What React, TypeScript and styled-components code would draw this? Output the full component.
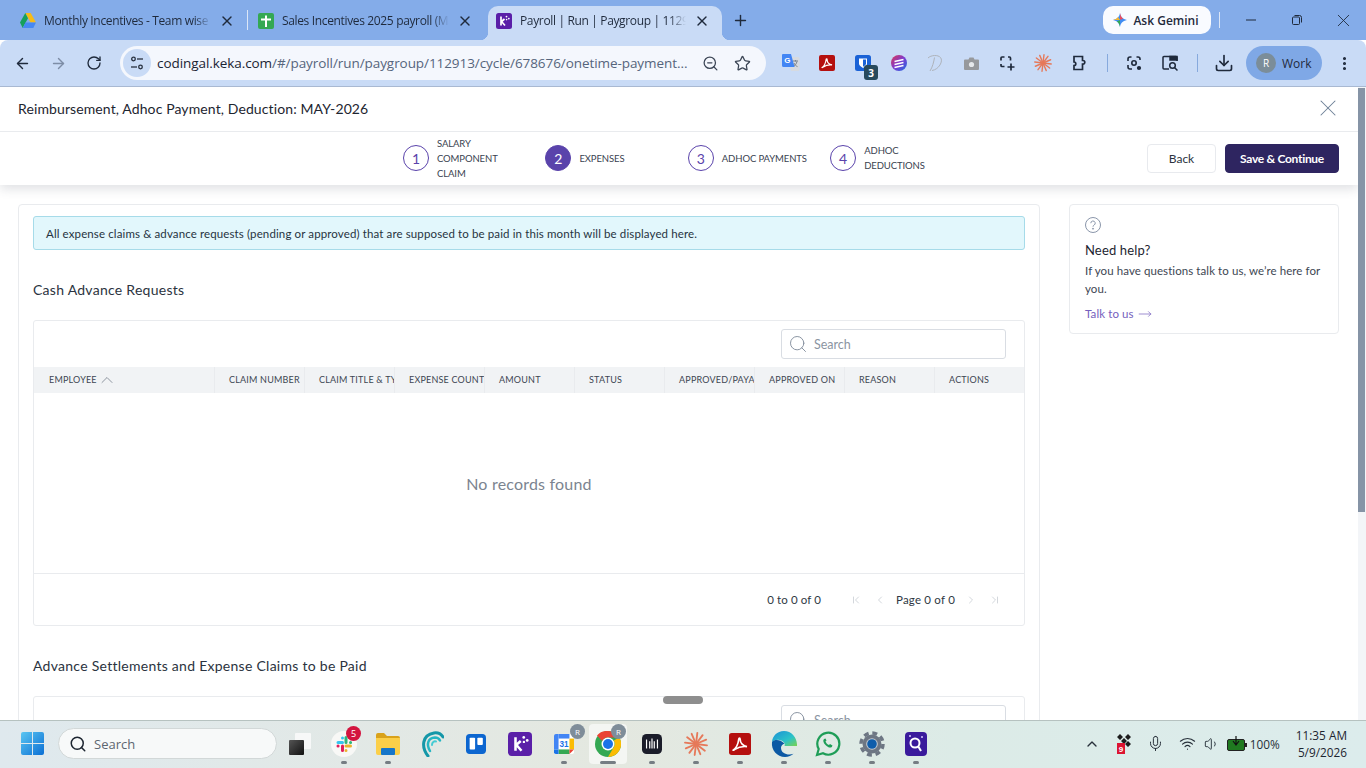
import { Fragment } from 'react';
import type { ReactNode } from 'react';
import styled, { createGlobalStyle, css } from 'styled-components';
import {
  ArrowLeft,
  ArrowRight,
  ChevronFirst,
  ChevronLast,
  ChevronLeft,
  ChevronRight,
  ChevronUp,
  Download,
  Mic,
  MoveRight,
  MoreVertical,
  Plus,
  RotateCw,
  Search as SearchIcon,
  Star,
  Volume1,
  Wifi,
  X,
  ZoomOut,
} from 'lucide-react';

const chromeFont = '"Open Sans", "Noto Sans", sans-serif';
const pageFont = 'Lato, "Open Sans", sans-serif';

const GlobalStyle = createGlobalStyle`
  html, body, #root {
    margin: 0;
    padding: 0;
    height: 100%;
    overflow: hidden;
  }
  * {
    box-sizing: border-box;
  }
`;

const Screen = styled.div`
  width: 1366px;
  height: 768px;
  display: flex;
  flex-direction: column;
  overflow: hidden;
  font-family: ${pageFont};
  background: #fff;
`;

/* browser chrome */

const TabStrip = styled.div`
  height: 40px;
  flex: none;
  display: flex;
  align-items: flex-end;
  padding-left: 10px;
  background: #84ace9;
  font-family: ${chromeFont};
`;

const activeTab = css`
  position: relative;
  width: 234px;
  margin: 0 1px 0 2px;
  padding-left: 8px;
  background: #c9dbf6;
  &::before,
  &::after {
    content: '';
    position: absolute;
    bottom: 0;
    width: 8px;
    height: 8px;
  }
  &::before {
    left: -8px;
    background: radial-gradient(circle at 0 0, transparent 8px, #c9dbf6 8.5px);
  }
  &::after {
    right: -8px;
    background: radial-gradient(circle at 100% 0, transparent 8px, #c9dbf6 8.5px);
  }
`;

const Tab = styled.div<{ $active?: boolean }>`
  width: 237px;
  height: 34px;
  display: flex;
  align-items: center;
  gap: 8px;
  padding: 0 12px 5px 10px;
  border-radius: 10px 10px 0 0;
  color: #1f2a3c;
  ${(p) => p.$active && activeTab}
`;

const TabTitle = styled.span`
  flex: 1;
  min-width: 0;
  font-size: 12px;
  letter-spacing: -0.35px;
  white-space: nowrap;
  overflow: hidden;
  -webkit-mask-image: linear-gradient(90deg, #000 90%, transparent);
  mask-image: linear-gradient(90deg, #000 90%, transparent);
`;

const TabSep = styled.div<{ $hidden?: boolean }>`
  width: 1px;
  height: 20px;
  margin-bottom: 10px;
  background: ${(p) => (p.$hidden ? 'transparent' : '#dbe6f7')};
`;

const NewTab = styled.div`
  width: 34px;
  height: 34px;
  padding-bottom: 5px;
  display: flex;
  align-items: center;
  justify-content: center;
  color: #1f2a3c;
`;

const StripRight = styled.div`
  margin-left: auto;
  align-self: stretch;
  display: flex;
  align-items: center;
`;

const GeminiPill = styled.div`
  width: 108px;
  height: 28px;
  padding-right: 2px;
  display: flex;
  align-items: center;
  justify-content: center;
  gap: 6px;
  border-radius: 10px;
  background: #f9fbff;
  font-size: 12px;
  font-weight: 600;
  color: #1f2a3c;
`;

const StripSep = styled.div`
  width: 1px;
  height: 16px;
  margin: 0 8px;
  background: #dbe6f7;
`;

const WinButton = styled.div`
  width: 46px;
  height: 40px;
  display: flex;
  align-items: center;
  justify-content: center;
  color: #1f2a3c;
`;

const Toolbar = styled.div`
  height: 47px;
  flex: none;
  display: flex;
  align-items: center;
  padding-left: 4px;
  background: #c9dbf6;
  border-bottom: 1px solid #a9b9d2;
  border-radius: 8px 8px 0 0;
  font-family: ${chromeFont};
`;

const ToolButton = styled.div<{ $muted?: boolean }>`
  position: relative;
  width: 36px;
  height: 36px;
  flex: none;
  display: flex;
  align-items: center;
  justify-content: center;
  color: ${(p) => (p.$muted ? '#7d8da6' : '#1f2a3c')};
`;

const Omnibox = styled.div`
  width: 646px;
  height: 34px;
  flex: none;
  margin: 0 7px 0 8px;
  padding: 0 8px 0 3px;
  display: flex;
  align-items: center;
  border-radius: 17px;
  background: #f4f7fd;
`;

const TuneBadge = styled.div`
  width: 28px;
  height: 28px;
  flex: none;
  display: flex;
  align-items: center;
  justify-content: center;
  border-radius: 50%;
  background: #c9dbf6;
`;

const Url = styled.div`
  flex: 1;
  min-width: 0;
  margin-left: 6px;
  font-size: 13.5px;
  letter-spacing: -0.07px;
  white-space: nowrap;
  overflow: hidden;
  color: #56657c;
  b {
    font-weight: 400;
    color: #1b2433;
  }
`;

const OmniIcon = styled.div`
  width: 32px;
  display: flex;
  justify-content: center;
  color: #3c4656;
`;

const ToolSep = styled.div<{ $left: number; $right: number }>`
  width: 1px;
  height: 18px;
  flex: none;
  margin: 0 ${(p) => p.$right}px 0 ${(p) => p.$left}px;
  background: #86a9dd;
`;

const CountBadge = styled.span`
  position: absolute;
  right: 3px;
  bottom: 1px;
  width: 14px;
  height: 15px;
  display: flex;
  align-items: center;
  justify-content: center;
  border-radius: 3px;
  background: #27495c;
  color: #fff;
  font-size: 10px;
  font-weight: 700;
`;

const ProfilePill = styled.div`
  width: 76px;
  height: 34px;
  flex: none;
  margin: 0 4px;
  padding-left: 10px;
  display: flex;
  align-items: center;
  gap: 6px;
  border-radius: 17px;
  background: #7fa8e6;
  font-size: 12px;
  color: #1f2a3c;
`;

const ProfileAvatar = styled.span`
  width: 20px;
  height: 20px;
  display: flex;
  align-items: center;
  justify-content: center;
  border-radius: 50%;
  background: #7b8d99;
  color: #fff;
  font-size: 10px;
`;

/* keka page */

const PageArea = styled.div`
  position: relative;
  flex: 1;
  min-height: 0;
  display: flex;
`;

const Page = styled.div`
  flex: 1;
  min-width: 0;
  display: flex;
  flex-direction: column;
  overflow: hidden;
`;

const Scrollbar = styled.div`
  width: 8px;
  flex: none;
  padding-top: 1px;
  background: #f3f5f8;
`;

const ScrollThumb = styled.div`
  width: 7px;
  height: 424px;
  background: #8694a6;
`;

const PageHeader = styled.header`
  position: relative;
  z-index: 1;
  flex: none;
  background: #fff;
  box-shadow: 0 4px 10px rgba(60, 70, 90, 0.16);
`;

const TitleRow = styled.div`
  height: 45px;
  display: flex;
  align-items: center;
  justify-content: space-between;
  padding: 0 16px 2px 18px;
  border-bottom: 1px solid #e9ebee;
`;

const PageTitle = styled.h1`
  margin: 0;
  font-size: 14px;
  font-weight: 400;
  letter-spacing: 0.11px;
  color: #1d2530;
`;

const CloseIcon = styled.div`
  display: flex;
  color: #6d7f96;
`;

const StepRow = styled.div`
  height: 53px;
  display: flex;
  align-items: center;
  padding: 0 19px 1px 403px;
`;

const Step = styled.div`
  width: 142.4px;
  display: flex;
  align-items: center;
  gap: 8px;
`;

const StepCircle = styled.span<{ $active?: boolean }>`
  width: 26px;
  height: 26px;
  flex: none;
  display: flex;
  align-items: center;
  justify-content: center;
  border-radius: 50%;
  border: 1px solid #5a43ab;
  background: ${(p) => (p.$active ? '#5a43ab' : '#fff')};
  color: ${(p) => (p.$active ? '#fff' : '#5a43ab')};
  font-size: 14px;
`;

const StepLabel = styled.span`
  max-width: 88px;
  font-size: 9.5px;
  line-height: 15px;
  letter-spacing: -0.1px;
  color: #39424f;
  text-transform: uppercase;
`;

const StepActions = styled.div`
  margin-left: auto;
  display: flex;
  gap: 9px;
`;

const Button = styled.button<{ $primary?: boolean }>`
  height: 29px;
  width: ${(p) => (p.$primary ? '114px' : '69px')};
  padding: 0;
  border-radius: 4px;
  border: 1px solid ${(p) => (p.$primary ? '#2e2560' : '#e8eaee')};
  background: ${(p) => (p.$primary ? '#2e2560' : '#fff')};
  color: ${(p) => (p.$primary ? '#fff' : '#2b3340')};
  font-family: ${pageFont};
  font-size: 12px;
  letter-spacing: ${(p) => (p.$primary ? '-0.3px' : '0')};
  font-weight: ${(p) => (p.$primary ? 700 : 400)};
`;

const Body = styled.div`
  flex: 1;
  min-height: 0;
  display: flex;
  align-items: flex-start;
  gap: 29px;
  padding: 19px 19px 0 18px;
  overflow: hidden;
`;

const MainCard = styled.section`
  width: 1022px;
  flex: none;
  padding: 11px 14px 0;
  border: 1px solid #e9ebee;
  border-radius: 4px;
`;

const Notice = styled.div`
  height: 34px;
  display: flex;
  align-items: center;
  padding-left: 12px;
  border: 1px solid #a6dbe9;
  border-radius: 3px;
  background: #e2f7fc;
  font-size: 11.5px;
  letter-spacing: 0.12px;
  color: #26333f;
`;

const SectionTitle = styled.h2`
  margin: 31px 0 22px;
  font-size: 14px;
  line-height: 17px;
  font-weight: 400;
  letter-spacing: 0.27px;
  color: #2b3340;
`;

const TableBox = styled.div`
  border: 1px solid #e9ebee;
  border-radius: 3px;
`;

const TableTools = styled.div`
  height: 46px;
  display: flex;
  align-items: flex-start;
  justify-content: flex-end;
  padding: 8px 18px 0 0;
`;

const SearchField = styled.div`
  width: 225px;
  height: 30px;
  display: flex;
  align-items: center;
  gap: 6px;
  padding-left: 6px;
  border: 1px solid #d9dde3;
  border-radius: 3px;
  font-size: 12.5px;
  color: #8b94a1;
`;

const HeadRow = styled.div`
  height: 26px;
  display: grid;
  grid-template-columns: 180px repeat(9, 90px);
  background: #f1f3f5;
`;

const HeadCell = styled.div`
  display: flex;
  align-items: center;
  padding: 0 0 1px 15px;
  overflow: hidden;
  white-space: nowrap;
  font-size: 9px;
  letter-spacing: 0.2px;
  color: #3d4652;
  & + & {
    padding-left: 14px;
    border-left: 1px solid #e9ebee;
  }
`;

const EmptyBody = styled.div`
  height: 180px;
  display: flex;
  align-items: center;
  justify-content: center;
  font-size: 16px;
  letter-spacing: 0.2px;
  color: #7b8490;
`;

const Pager = styled.div`
  height: 52px;
  display: flex;
  align-items: center;
  justify-content: flex-end;
  gap: 10px;
  padding-right: 22px;
  border-top: 1px solid #e9ebee;
  font-size: 11.5px;
  letter-spacing: 0.1px;
  color: #2f3844;
`;

const PagerCount = styled.span`
  margin-right: 18px;
`;

const PagerPage = styled.span`
  margin: 0 -1px;
  letter-spacing: 0.2px;
`;

const PagerArrow = styled.span`
  width: 14px;
  display: flex;
  justify-content: center;
  color: #d3d7dc;
`;

const HelpCard = styled.aside`
  width: 270px;
  flex: none;
  height: 130px;
  padding: 12px 15px;
  border: 1px solid #e9ebee;
  border-radius: 4px;
`;

const HelpIcon = styled.div`
  display: flex;
  color: #8a96aa;
`;

const HelpTitle = styled.h3`
  margin: 8px 0 3px;
  font-size: 13px;
  line-height: 18px;
  font-weight: 400;
  letter-spacing: 0.15px;
  color: #1d2530;
`;

const HelpText = styled.p`
  margin: 0 0 4px;
  font-size: 11.5px;
  line-height: 18px;
  letter-spacing: 0.08px;
  color: #3d4652;
`;

const HelpLink = styled.a`
  display: inline-flex;
  align-items: center;
  gap: 4px;
  font-size: 11.5px;
  line-height: 18px;
  letter-spacing: 0.1px;
  color: #7560bd;
`;

const DragHandle = styled.div`
  position: absolute;
  left: 663px;
  bottom: 16px;
  width: 40px;
  height: 8px;
  border-radius: 4px;
  background: #8e8e8e;
`;

/* windows taskbar */

const Taskbar = styled.footer`
  height: 48px;
  flex: none;
  display: flex;
  align-items: center;
  padding: 0 0 2px 10px;
  border-top: 1px solid #b6c2c0;
  background: linear-gradient(90deg, #dfe9ee, #e4e8e0 45%, #dcebe7 70%, #dcecec);
  font-family: ${chromeFont};
  color: #1c2530;
`;

const StartButton = styled.div`
  width: 44px;
  flex: none;
  display: flex;
  justify-content: center;
`;

const TaskSearch = styled.div`
  width: 219px;
  height: 31px;
  flex: none;
  margin: 0 0 0 4px;
  padding-left: 10px;
  display: flex;
  align-items: center;
  gap: 7px;
  border: 1px solid #d2d8d8;
  border-radius: 16px;
  background: #f7f9f9;
  font-size: 13px;
  color: #5d6670;
`;

const TaskIcons = styled.div`
  margin-left: 1px;
  display: flex;
`;

const TaskSlot = styled.div<{ $active?: boolean }>`
  position: relative;
  width: ${(p) => (p.$active ? '38px' : '44px')};
  height: 40px;
  margin: 0 ${(p) => (p.$active ? '3px' : '0')};
  display: flex;
  align-items: center;
  justify-content: center;
  border-radius: 4px;
  background: ${(p) => (p.$active ? 'rgba(255,255,255,.6)' : 'transparent')};
`;

const RunDot = styled.span<{ $active?: boolean }>`
  position: absolute;
  left: 50%;
  bottom: 0;
  width: ${(p) => (p.$active ? '16px' : '6px')};
  height: 3px;
  margin-left: ${(p) => (p.$active ? '-8px' : '-3px')};
  border-radius: 2px;
  background: #757d83;
`;

const RedBadge = styled.span`
  position: absolute;
  top: 2px;
  right: 5px;
  width: 15px;
  height: 15px;
  display: flex;
  align-items: center;
  justify-content: center;
  border-radius: 50%;
  background: #d3143f;
  color: #fff;
  font-size: 9px;
`;

const GreyBadge = styled.span`
  position: absolute;
  top: 0;
  right: 1px;
  width: 15px;
  height: 15px;
  display: flex;
  align-items: center;
  justify-content: center;
  border-radius: 50%;
  background: #7f8d99;
  color: #fff;
  font-size: 8px;
`;

const Tray = styled.div`
  margin-left: auto;
  display: flex;
  align-items: center;
  padding-right: 19px;
`;

const TrayItem = styled.div<{ $width: number }>`
  width: ${(p) => p.$width}px;
  display: flex;
  align-items: center;
  justify-content: center;
  color: #27303a;
`;

const BatteryItem = styled.div`
  width: 60px;
  display: flex;
  align-items: center;
  justify-content: flex-end;
  gap: 3px;
  font-size: 11.8px;
  color: #27303a;
`;

const Clock = styled.div`
  margin-left: 16px;
  text-align: right;
  font-size: 11.8px;
  line-height: 17px;
`;

/* drawn logos */

const DriveLogo = () => (
  <svg width="16" height="15" viewBox="0 0 16 15">
    <path d="M5.3 0h5.4l5.3 9.500h-5.400z" fill="#f6bb18" />
    <path d="M5.300 0 0 9.500 2.700 15l5.300-9.700z" fill="#16a05d" />
    <path d="M2.700 15 5.400 9.500H16L13.300 15z" fill="#4688f4" />
  </svg>
);

const SheetLogo = () => (
  <svg width="16" height="16" viewBox="0 0 16 16">
    <rect width="16" height="16" rx="2" fill="#34a853" />
    <path d="M7 2.500h2V14H7zM3 5.500h10v2H3z" fill="#fff" />
  </svg>
);

const KekaLogo = ({ size = 16 }: { size?: number }) => (
  <svg width={size} height={size} viewBox="0 0 16 16">
    <rect width="16" height="16" rx="2.500" fill="#5a1fa8" />
    <path d="M5 3.500v9M5 9l3.500-3M5.500 8.500l3.500 4" stroke="#fff" strokeWidth="1.700" fill="none" />
    <circle cx="10.500" cy="3.600" r=".9" fill="#fff" />
    <circle cx="12.800" cy="5.600" r=".9" fill="#fff" />
    <circle cx="10.600" cy="6.600" r=".8" fill="#fff" />
  </svg>
);

const GeminiLogo = () => (
  <svg width="14" height="14" viewBox="0 0 14 14">
    <path d="M7 0c.6 3.600 2.400 6 7 7-4.600 1-6.400 3.400-7 7-.6-3.600-2.400-6-7-7 4.600-1 6.400-3.400 7-7z" fill="#3f8cf2" />
    <path d="M7 0c.4 2.400 1.300 4.200 3.200 5.400L7 7z" fill="#ea4c5e" />
    <path d="M0 7c2.400-.5 4-1.400 5-3L7 7z" fill="#f7b52c" />
    <path d="M7 14c-.4-2.400-1.300-4.200-3.200-5.400L7 7z" fill="#34a853" />
  </svg>
);

const TuneIcon = () => (
  <svg width="16" height="16" viewBox="0 0 16 16" fill="none" stroke="#27303f" strokeWidth="1.300">
    <circle cx="4.500" cy="4" r="1.800" />
    <path d="M8 4h6" />
    <circle cx="11.500" cy="12" r="1.800" />
    <path d="M2 12h6" />
  </svg>
);

const TranslateLogo = () => (
  <svg width="20" height="20" viewBox="0 0 20 20">
    <path d="M8 4h9a1.500 1.500 0 0 1 1.500 1.500v11A1.500 1.500 0 0 1 17 18H10z" fill="#d6dae0" />
    <path
      d="M12 8h5M14.500 7v1.500M16 8.500c-.6 2.400-2 4-3.500 5M13 10c.6 1.600 2 3 3.500 3.600"
      stroke="#7b838d"
      strokeWidth="1"
      fill="none"
    />
    <path d="M2 1h8l3.600 13H2.500A1.500 1.500 0 0 1 1 12.500V2a1 1 0 0 1 1-1z" fill="#4285f4" />
    <text x="3.200" y="10" fontFamily="Liberation Sans, sans-serif" fontSize="8" fontWeight="700" fill="#fff">
      G
    </text>
  </svg>
);

const AcrobatLogo = ({ size = 16 }: { size?: number }) => (
  <svg width={size} height={size} viewBox="0 0 16 16">
    <rect width="16" height="16" rx="2" fill="#b5100f" />
    <path
      d="M3 12.500c2-1.200 3.600-4.200 4.100-8 .1-1 1-1 1 0 0 2.800 2.200 5 5 5.400-2.800-.3-6.500.4-8.800 2-.7.500-1.300.8-1.300.6z"
      fill="none"
      stroke="#fff"
      strokeWidth="1.200"
    />
  </svg>
);

const BitwardenLogo = () => (
  <svg width="16" height="16" viewBox="0 0 16 16">
    <rect width="16" height="16" rx="2.500" fill="#1a62d6" />
    <path d="M4 3.500h8v5c0 2-2 3.400-4 4.500-2-1.100-4-2.500-4-4.500z" fill="#fff" />
    <path d="M8 4.500h3v4c0 1.400-1.500 2.400-3 3.200z" fill="#1a62d6" />
  </svg>
);

const StackLogo = () => (
  <svg width="16" height="16" viewBox="0 0 16 16">
    <defs>
      <linearGradient id="stackFill" x1="0" y1="0" x2="1" y2="1">
        <stop offset="0" stopColor="#e0364f" />
        <stop offset=".5" stopColor="#7d3bd1" />
        <stop offset="1" stopColor="#1c6fe0" />
      </linearGradient>
    </defs>
    <circle cx="8" cy="8" r="8" fill="url(#stackFill)" />
    <path d="M3.500 6.500 12.500 4.500M3.500 9.500l9-2M3.500 12.500l9-2" stroke="#fff" strokeWidth="1.300" />
  </svg>
);

const ScriptD = () => (
  <svg width="20" height="20" viewBox="0 0 20 20" fill="none" stroke="#aeb3ba" strokeWidth="1">
    <path d="M3 5c3-3 10-3.400 12.500-.5 3 3.500-1.500 12-8.500 13M9.500 4.500C8.800 9 7.500 14 5 18" />
  </svg>
);

const CameraLogo = () => (
  <svg width="15" height="13" viewBox="0 0 15 13">
    <path
      d="M1 2.500h3.500L5.500.5h4l1 2H14a1 1 0 0 1 1 1V12a1 1 0 0 1-1 1H1a1 1 0 0 1-1-1V3.500a1 1 0 0 1 1-1z"
      fill="#97999c"
    />
    <circle cx="7.500" cy="7.500" r="2.600" fill="#e6e8ea" />
  </svg>
);

const CaptureIcon = () => (
  <svg width="18" height="18" viewBox="0 0 18 18" fill="none" stroke="#1f2a3c" strokeWidth="1.700">
    <path d="M3 6.500V4a1 1 0 0 1 1-1h2.500M10 3h1.500a1 1 0 0 1 1 1v2.500M3 10v1.500a1 1 0 0 0 1 1h2.500M13 9.500v7M9.500 13h7" />
  </svg>
);

const ExtensionIcon = () => (
  <svg width="18" height="18" viewBox="0 0 18 18" fill="none" stroke="#1f2a3c" strokeWidth="1.700">
    <path d="M4 2.500h8.500v4h.5a1.800 1.800 0 0 1 0 3.600h-.5v5.400H4v-3.900a1.800 1.800 0 0 0 0-3.600z" />
  </svg>
);

const Burst = ({ size = 18 }: { size?: number }) => (
  <svg width={size} height={size} viewBox="0 0 18 18" stroke="#e6795a" strokeWidth="1.400" strokeLinecap="round">
    {Array.from({ length: 12 }).map((_, i) => {
      const a = (i * Math.PI) / 6;
      return <line key={i} x1={9} y1={9} x2={9 + 8.3 * Math.cos(a + 0.12)} y2={9 + 8.3 * Math.sin(a + 0.12)} />;
    })}
  </svg>
);

const LensIcon = () => (
  <svg width="18" height="18" viewBox="0 0 18 18" fill="none" stroke="#1f2a3c" strokeWidth="1.600">
    <path d="M3 7V5a2 2 0 0 1 2-2h1.500M11.500 3H13a2 2 0 0 1 2 2v1M3 11v2a2 2 0 0 0 2 2h2" />
    <circle cx="9" cy="9" r="2.200" />
    <circle cx="14" cy="14" r="1.300" fill="#1f2a3c" />
  </svg>
);

const TabSearchIcon = () => (
  <svg width="18" height="18" viewBox="0 0 18 18" fill="none" stroke="#1f2a3c" strokeWidth="1.500">
    <path d="M8 15H3a1 1 0 0 1-1-1V3.500a1 1 0 0 1 1-1h12a1 1 0 0 1 1 1V7" />
    <path d="M9 2.500h7V6H9z" fill="#1f2a3c" />
    <circle cx="11.500" cy="11.500" r="2.800" />
    <path d="m13.500 13.500 3 3" />
  </svg>
);

const RestoreIcon = () => (
  <svg width="10" height="10" viewBox="0 0 10 10" fill="none" stroke="#1f2a3c">
    <rect x=".5" y="2" width="7" height="7.500" rx="1" />
    <path d="M2.500 .5h5a2 2 0 0 1 2 2v5" />
  </svg>
);

const WindowsLogo = () => (
  <svg width="23" height="23" viewBox="0 0 23 23">
    <defs>
      <linearGradient id="winFill" x1="0" y1="0" x2="1" y2="1">
        <stop offset="0" stopColor="#5bc6f2" />
        <stop offset="1" stopColor="#0b6fd4" />
      </linearGradient>
    </defs>
    <path
      d="M0 2a2 2 0 0 1 2-2h9v11H0zM12 0h9a2 2 0 0 1 2 2v9H12zM0 12h11v11H2a2 2 0 0 1-2-2zM12 12h11v9a2 2 0 0 1-2 2h-9z"
      fill="url(#winFill)"
    />
  </svg>
);

const TaskViewIcon = () => (
  <svg width="22" height="22" viewBox="0 0 22 22">
    <defs>
      <linearGradient id="viewFill" x1="0" y1="0" x2="1" y2="1">
        <stop offset="0" stopColor="#555" />
        <stop offset="1" stopColor="#111" />
      </linearGradient>
    </defs>
    <rect x="6" y="0" width="16" height="16" rx="1" fill="#f7f8f8" />
    <rect x="0" y="7" width="15" height="15" rx="1" fill="url(#viewFill)" />
  </svg>
);

const SlackLogo = () => (
  <svg width="26" height="26" viewBox="0 0 26 26">
    <circle cx="13" cy="13" r="13" fill="#f8f8f6" />
    <g strokeWidth="3" strokeLinecap="round">
      <path d="M7 11.500h4.500M11.500 7v.1" stroke="#36c5f0" />
      <path d="M15 6.500V11.500M19.500 11.500h.1" stroke="#2eb67d" />
      <path d="M15 15h4.500M15 19.500v.1" stroke="#ecb22e" />
      <path d="M11.500 15v4.500M7 15h.1" stroke="#e01e5a" />
    </g>
  </svg>
);

const FolderLogo = () => (
  <svg width="24" height="22" viewBox="0 0 24 22">
    <path d="M0 2a2 2 0 0 1 2-2h6l3 3h11a2 2 0 0 1 2 2v4H0z" fill="#d9a21b" />
    <path d="M0 5h24v15a2 2 0 0 1-2 2H2a2 2 0 0 1-2-2z" fill="#fbcf49" />
    <rect x="5" y="15" width="14" height="7" rx="1" fill="#1676c9" />
  </svg>
);

const SwirlLogo = () => (
  <svg width="24" height="26" viewBox="0 0 24 26" fill="none" strokeLinecap="round">
    <path d="M8 25C1 16 2 4 14 2c4-.6 7 1 9 4" stroke="#1497a8" strokeWidth="3" />
    <path d="M10 20C6 13 8 7 15 6.500c2.500 0 4 1 5 3" stroke="#25b5c2" strokeWidth="2.500" />
    <path d="M12 14c0-3 2-4 4-3.500" stroke="#45cbd3" strokeWidth="2" />
  </svg>
);

const TrelloLogo = () => (
  <svg width="20" height="20" viewBox="0 0 22 22">
    <rect width="22" height="22" rx="4" fill="#0c66d0" />
    <rect x="4" y="4" width="6" height="13" rx="1" fill="#fff" />
    <rect x="12.500" y="4" width="6" height="8" rx="1" fill="#fff" />
  </svg>
);

const CalendarLogo = () => (
  <svg width="20" height="22" viewBox="0 0 22 22">
    <rect width="22" height="22" rx="2" fill="#fff" />
    <path d="M0 2a2 2 0 0 1 2-2h3v17H0z" fill="#4285f4" />
    <path d="M5 0h12v5H5z" fill="#4285f4" />
    <path d="M17 5h5v12h-5z" fill="#fbbc04" />
    <path d="M5 17h12v5H5z" fill="#34a853" />
    <path d="M0 17h5v5H2a2 2 0 0 1-2-2z" fill="#1a73e8" />
    <path d="M17 17h5l-5 5z" fill="#ea4335" />
    <text x="6" y="14.500" fontFamily="Liberation Sans, sans-serif" fontSize="9" fontWeight="700" fill="#1a73e8">
      31
    </text>
  </svg>
);

const ChromeLogo = () => (
  <svg width="26" height="26" viewBox="0 0 26 26">
    <circle cx="13" cy="13" r="13" fill="#34a853" />
    <path d="M13 0a13 13 0 0 1 11.300 6.500H13A6.500 6.500 0 0 0 7.200 10L2 4.500A13 13 0 0 1 13 0z" fill="#ea4335" />
    <path d="M24.300 6.500A13 13 0 0 1 13 26l5.700-9.700A6.500 6.500 0 0 0 18.800 9.500z" fill="#fbbc04" />
    <circle cx="13" cy="13" r="6.500" fill="#fff" />
    <circle cx="13" cy="13" r="5" fill="#1a73e8" />
  </svg>
);

const BarsLogo = () => (
  <svg width="20" height="22" viewBox="0 0 22 22">
    <rect width="22" height="22" rx="5" fill="#1b1d2a" />
    <path d="M5 6v10M8.500 8v8M11 5v11M13.500 8v8M17 6v10" stroke="#fff" strokeWidth="1.300" />
  </svg>
);

const EdgeLogo = () => (
  <svg width="26" height="26" viewBox="0 0 26 26">
    <defs>
      <linearGradient id="edgeTop" x1="0" y1="0" x2="1" y2="1">
        <stop offset="0" stopColor="#1b8fd6" />
        <stop offset=".6" stopColor="#2cc3c8" />
        <stop offset="1" stopColor="#7ad24e" />
      </linearGradient>
    </defs>
    <path d="M13 0C6 0 1.500 5 1 11c3-3 9-3.500 12 .5 1 1.400.8 2.500.5 3.500H26c.4-8-5-15-13-15z" fill="url(#edgeTop)" />
    <path
      d="M1 11C0 19 6 26 14 26c3.500 0 6.500-1.200 8.500-3.200-5 2-12.500.2-12.500-6 0-2 1.400-3.600 3.500-4.300C9 8.500 4 8 1 11z"
      fill="#0c59a4"
    />
  </svg>
);

const WhatsAppLogo = () => (
  <svg width="26" height="26" viewBox="0 0 26 26" fill="none">
    <path d="M2 24l1.700-6A11 11 0 1 1 8 22.300z" stroke="#1e9d57" strokeWidth="2.200" />
    <path
      d="M9 8c-1.500 1.500-.5 4 1.500 6s4.500 3.500 6.300 2l.7-1.500-2.500-1.500-1 1c-1.500-.5-3-2-3.500-3.500l1-1L10.500 7.500z"
      fill="#1e9d57"
    />
  </svg>
);

const GearLogo = () => (
  <svg width="26" height="26" viewBox="0 0 26 26">
    <circle cx="13" cy="13" r="9.500" fill="#6d7683" />
    <circle cx="13" cy="13" r="11" fill="none" stroke="#6d7683" strokeWidth="3.500" strokeDasharray="4.900 3.740" />
    <circle cx="13" cy="13" r="5.800" fill="#c6ccd3" />
    <circle cx="13" cy="13" r="4.800" fill="#0e5dab" />
  </svg>
);

const GlassLogo = () => (
  <svg width="22" height="24" viewBox="0 0 22 24">
    <rect width="22" height="24" rx="4" fill="#3a1a9c" />
    <circle cx="10" cy="11" r="4.500" fill="none" stroke="#fff" strokeWidth="2" />
    <path d="m13 14 3 5" stroke="#fff" strokeWidth="2" />
    <circle cx="17" cy="5" r="1" fill="#d9c8ff" />
    <circle cx="5" cy="4" r="1" fill="#d9c8ff" />
  </svg>
);

const TrayDrop = () => (
  <svg width="16" height="20" viewBox="0 0 16 20">
    <path d="M4 0l3 3-3 3-3-3zM12 0l3 3-3 3-3-3zM8 4l3 3-3 3-3-3zM12 7l3 3-3 3-3-3z" fill="#1c1c1c" />
    <rect x="1" y="9" width="8" height="11" fill="#dc1431" />
    <text x="2.700" y="18" fontFamily="Liberation Sans, sans-serif" fontSize="8" fontWeight="700" fill="#fff">
      9
    </text>
  </svg>
);

const BatteryIcon = () => (
  <svg width="20" height="15" viewBox="0 0 20 15">
    <rect x=".5" y="3.500" width="17" height="11" rx="1.500" fill="#1f7a20" stroke="#222" />
    <rect x="18" y="7" width="2" height="4" fill="#222" />
    <path d="M9 0v9M6 5l3 4 3-4" stroke="#111" fill="none" strokeWidth="1.200" />
  </svg>
);

const tabs = [
  { icon: <DriveLogo />, title: 'Monthly Incentives - Team wise' },
  { icon: <SheetLogo />, title: 'Sales Incentives 2025 payroll (May)' },
  { icon: <KekaLogo />, title: 'Payroll | Run | Paygroup | 112913', active: true },
];

const columns = [
  'CLAIM NUMBER',
  'CLAIM TITLE & TYPE',
  'EXPENSE COUNT',
  'AMOUNT',
  'STATUS',
  'APPROVED/PAYABLE',
  'APPROVED ON',
  'REASON',
  'ACTIONS',
];

const steps = [
  { n: 1, label: 'Salary Component Claim' },
  { n: 2, label: 'Expenses', active: true },
  { n: 3, label: 'Adhoc Payments' },
  { n: 4, label: 'Adhoc Deductions' },
];

const taskApps: { icon: ReactNode; badge?: ReactNode; active?: boolean; dot?: boolean }[] = [
  { icon: <TaskViewIcon /> },
  { icon: <SlackLogo />, badge: <RedBadge>5</RedBadge>, dot: true },
  { icon: <FolderLogo />, dot: true },
  { icon: <SwirlLogo /> },
  { icon: <TrelloLogo /> },
  { icon: <KekaLogo size={24} /> },
  { icon: <CalendarLogo />, badge: <GreyBadge>R</GreyBadge>, dot: true },
  { icon: <ChromeLogo />, badge: <GreyBadge>R</GreyBadge>, active: true, dot: true },
  { icon: <BarsLogo />, dot: true },
  { icon: <Burst size={24} />, dot: true },
  { icon: <AcrobatLogo size={22} />, dot: true },
  { icon: <EdgeLogo />, dot: true },
  { icon: <WhatsAppLogo />, dot: true },
  { icon: <GearLogo />, dot: true },
  { icon: <GlassLogo />, dot: true },
];

function DataTable() {
  return (
    <TableBox>
      <TableTools>
        <SearchField>
          <SearchIcon size={20} strokeWidth={1.1} color="#7f8a99" />
          Search
        </SearchField>
      </TableTools>
      <HeadRow>
        <HeadCell>
          EMPLOYEE <ChevronUp size={20} strokeWidth={0.9} color="#6d7683" />
        </HeadCell>
        {columns.map((c) => (
          <HeadCell key={c}>{c}</HeadCell>
        ))}
      </HeadRow>
      <EmptyBody>No records found</EmptyBody>
      <Pager>
        <PagerCount>0 to 0 of 0</PagerCount>
        <PagerArrow>
          <ChevronFirst size={12} />
        </PagerArrow>
        <PagerArrow>
          <ChevronLeft size={12} />
        </PagerArrow>
        <PagerPage>Page 0 of 0</PagerPage>
        <PagerArrow>
          <ChevronRight size={12} />
        </PagerArrow>
        <PagerArrow>
          <ChevronLast size={12} />
        </PagerArrow>
      </Pager>
    </TableBox>
  );
}

export default function App() {
  return (
    <Screen>
      <GlobalStyle />
      <TabStrip>
        {tabs.map((t, i) => (
          <Fragment key={t.title}>
            <Tab $active={t.active}>
              {t.icon}
              <TabTitle>{t.title}</TabTitle>
              <X size={16} strokeWidth={2} />
            </Tab>
            {i < 2 && <TabSep $hidden={i === 1} />}
          </Fragment>
        ))}
        <NewTab>
          <Plus size={17} strokeWidth={2} />
        </NewTab>
        <StripRight>
          <GeminiPill>
            <GeminiLogo />
            Ask Gemini
          </GeminiPill>
          <StripSep />
          <WinButton>
            <svg width="10" height="2" viewBox="0 0 10 2">
              <path d="M0 1h10" stroke="#1f2a3c" />
            </svg>
          </WinButton>
          <WinButton>
            <RestoreIcon />
          </WinButton>
          <WinButton>
            <X size={21} strokeWidth={1} />
          </WinButton>
        </StripRight>
      </TabStrip>

      <Toolbar>
        <ToolButton>
          <ArrowLeft size={17} strokeWidth={2} />
        </ToolButton>
        <ToolButton $muted>
          <ArrowRight size={17} strokeWidth={2} />
        </ToolButton>
        <ToolButton>
          <RotateCw size={16} strokeWidth={2} />
        </ToolButton>
        <Omnibox>
          <TuneBadge>
            <TuneIcon />
          </TuneBadge>
          <Url>
            <b>codingal.keka.com</b>/#/payroll/run/paygroup/112913/cycle/678676/onetime-payment...
          </Url>
          <OmniIcon>
            <ZoomOut size={17} strokeWidth={1.8} />
          </OmniIcon>
          <OmniIcon>
            <Star size={17} strokeWidth={1.8} />
          </OmniIcon>
        </Omnibox>
        <ToolButton>
          <TranslateLogo />
        </ToolButton>
        <ToolButton>
          <AcrobatLogo />
        </ToolButton>
        <ToolButton>
          <BitwardenLogo />
          <CountBadge>3</CountBadge>
        </ToolButton>
        <ToolButton>
          <StackLogo />
        </ToolButton>
        <ToolButton>
          <ScriptD />
        </ToolButton>
        <ToolButton>
          <CameraLogo />
        </ToolButton>
        <ToolButton>
          <CaptureIcon />
        </ToolButton>
        <ToolButton>
          <Burst />
        </ToolButton>
        <ToolButton>
          <ExtensionIcon />
        </ToolButton>
        <ToolSep $left={10} $right={8} />
        <ToolButton>
          <LensIcon />
        </ToolButton>
        <ToolButton>
          <TabSearchIcon />
        </ToolButton>
        <ToolSep $left={9} $right={8} />
        <ToolButton>
          <Download size={20} strokeWidth={2} />
        </ToolButton>
        <ProfilePill>
          <ProfileAvatar>R</ProfileAvatar>
          Work
        </ProfilePill>
        <ToolButton>
          <MoreVertical size={17} strokeWidth={2.4} />
        </ToolButton>
      </Toolbar>

      <PageArea>
        <Page>
          <PageHeader>
            <TitleRow>
              <PageTitle>Reimbursement, Adhoc Payment, Deduction: MAY-2026</PageTitle>
              <CloseIcon>
                <X size={28} strokeWidth={0.9} />
              </CloseIcon>
            </TitleRow>
            <StepRow>
              {steps.map((s) => (
                <Step key={s.n}>
                  <StepCircle $active={s.active}>{s.n}</StepCircle>
                  <StepLabel>{s.label}</StepLabel>
                </Step>
              ))}
              <StepActions>
                <Button>Back</Button>
                <Button $primary>Save &amp; Continue</Button>
              </StepActions>
            </StepRow>
          </PageHeader>
          <Body>
            <MainCard>
              <Notice>
                All expense claims &amp; advance requests (pending or approved) that are supposed to be paid in this
                month will be displayed here.
              </Notice>
              <SectionTitle>Cash Advance Requests</SectionTitle>
              <DataTable />
              <SectionTitle>Advance Settlements and Expense Claims to be Paid</SectionTitle>
              <DataTable />
            </MainCard>
            <HelpCard>
              <HelpIcon>
                <svg width="16" height="16" viewBox="0 0 16 16" fill="none" stroke="currentColor" strokeWidth="1">
                  <circle cx="8" cy="8" r="7.500" />
                  <path d="M5.800 6.200a2.200 2.200 0 1 1 3.300 1.900c-.7.400-1.100.8-1.100 1.600" />
                  <circle cx="8" cy="11.700" r=".5" fill="currentColor" />
                </svg>
              </HelpIcon>
              <HelpTitle>Need help?</HelpTitle>
              <HelpText>If you have questions talk to us, we’re here for you.</HelpText>
              <HelpLink>
                Talk to us <MoveRight size={14} strokeWidth={1.2} />
              </HelpLink>
            </HelpCard>
          </Body>
        </Page>
        <Scrollbar>
          <ScrollThumb />
        </Scrollbar>
        <DragHandle />
      </PageArea>

      <Taskbar>
        <StartButton>
          <WindowsLogo />
        </StartButton>
        <TaskSearch>
          <SearchIcon size={18} strokeWidth={2} color="#1c2530" />
          Search
        </TaskSearch>
        <TaskIcons>
          {taskApps.map((a, i) => (
            <TaskSlot key={i} $active={a.active}>
              {a.icon}
              {a.badge}
              {a.dot && <RunDot $active={a.active} />}
            </TaskSlot>
          ))}
        </TaskIcons>
        <Tray>
          <TrayItem $width={32}>
            <ChevronUp size={16} strokeWidth={2} />
          </TrayItem>
          <TrayItem $width={32}>
            <TrayDrop />
          </TrayItem>
          <TrayItem $width={32}>
            <Mic size={17} strokeWidth={1.4} />
          </TrayItem>
          <TrayItem $width={32}>
            <Wifi size={17} strokeWidth={1.6} />
          </TrayItem>
          <TrayItem $width={16}>
            <Volume1 size={16} strokeWidth={1.4} />
          </TrayItem>
          <BatteryItem>
            <BatteryIcon />
            100%
          </BatteryItem>
          <Clock>
            11:35 AM
            <br />
            5/9/2026
          </Clock>
        </Tray>
      </Taskbar>
    </Screen>
  );
}
